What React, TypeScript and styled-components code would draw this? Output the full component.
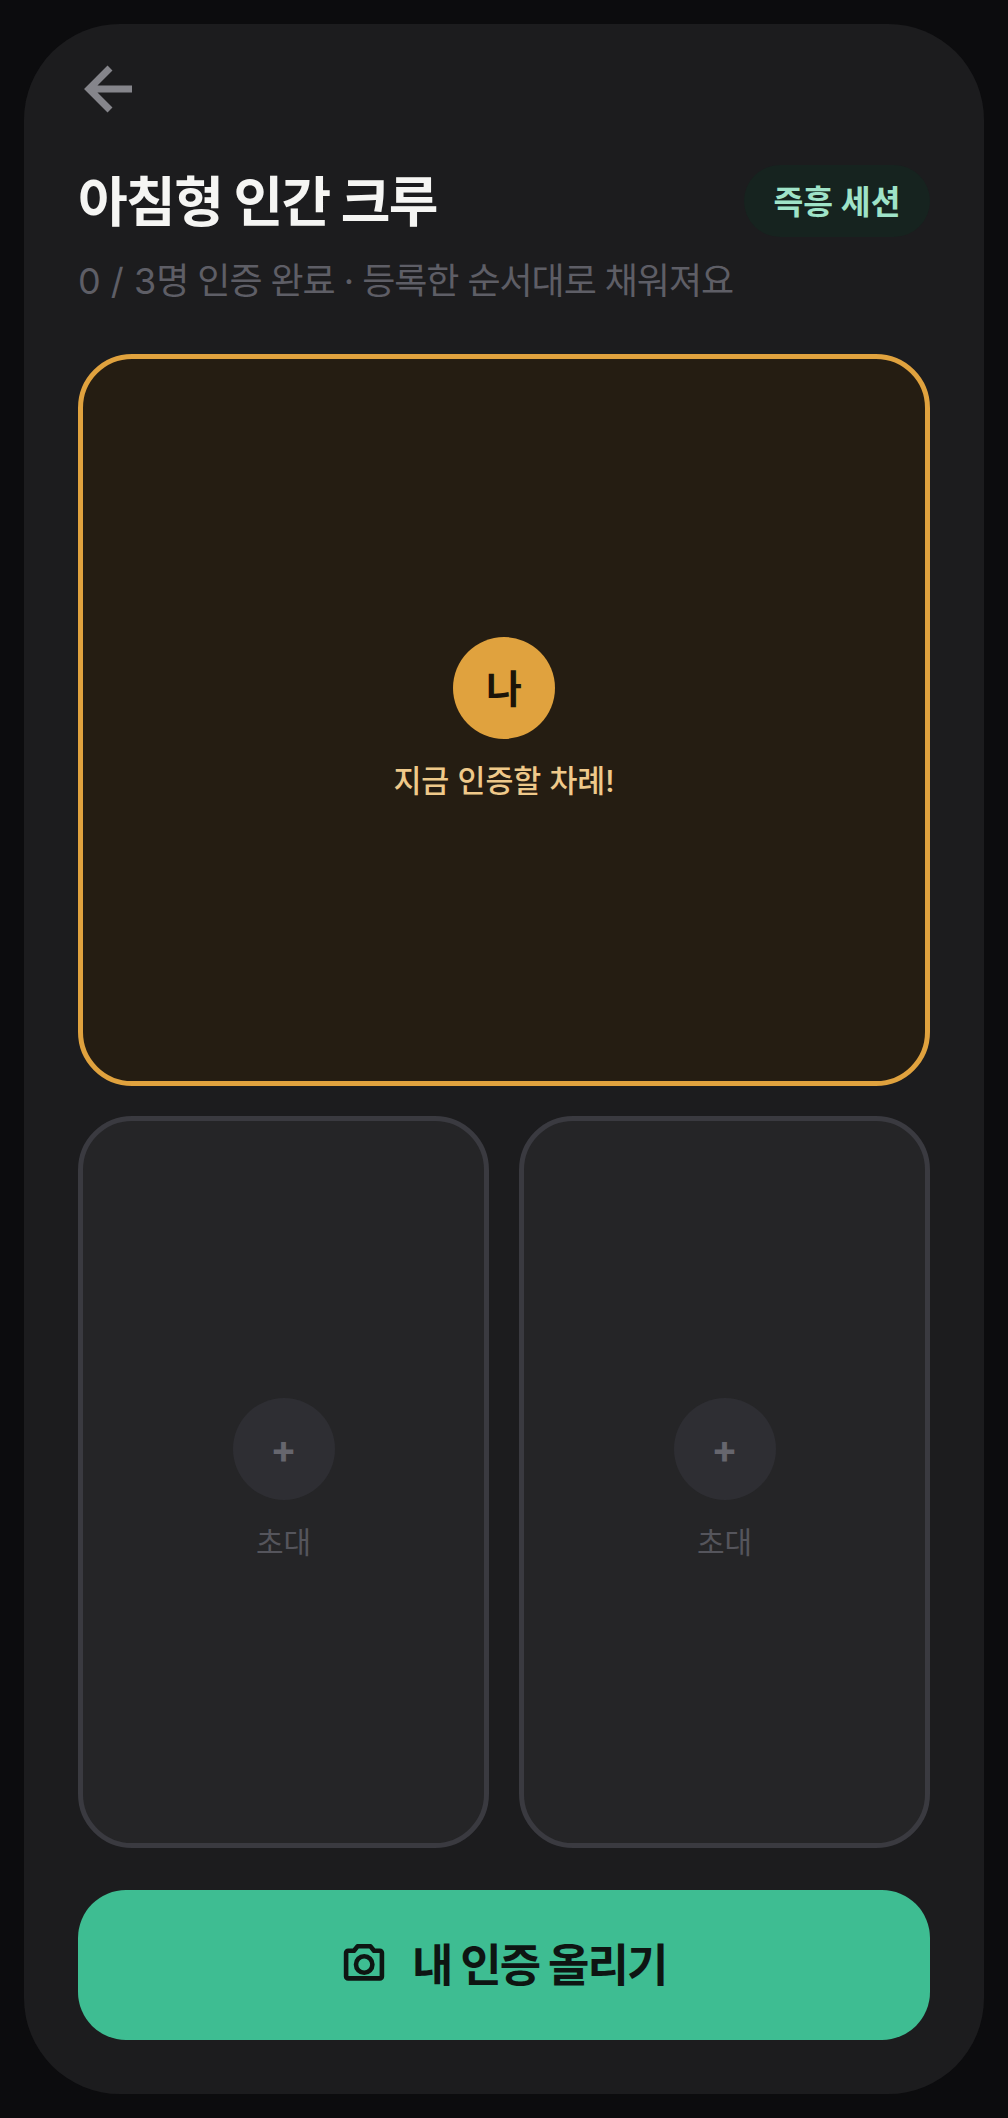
import React from 'react';
import styled, { createGlobalStyle } from 'styled-components';

const Global = createGlobalStyle`
  html, body { margin: 0; padding: 0; background: #0c0c0e; }
  * { box-sizing: border-box; }
  body { font-family: Inter, "Noto Sans CJK KR", sans-serif; }
`;

const Page = styled.div`
  width: 1008px;
  height: 2118px;
  padding: 24px;
  background: #0c0c0e;
`;

const Phone = styled.main`
  width: 960px;
  height: 2070px;
  padding: 41px 54px 54px;
  border-radius: 96px;
  background: #1c1c1e;
  display: flex;
  flex-direction: column;
`;

const BackButton = styled.button`
  width: 48px;
  height: 48px;
  margin-left: 6px;
  padding: 0;
  border: 0;
  background: none;
  color: #85858b;
  display: block;
  flex: none;
`;

const HeaderRow = styled.header`
  margin-top: 52px;
  height: 72px;
  display: flex;
  align-items: flex-start;
  justify-content: space-between;
`;

const Title = styled.h1`
  margin: 0;
  font-size: 54px;
  line-height: 76px;
  font-weight: 700;
  color: #f5f5f3;
  letter-spacing: -1.6px;
`;

const Badge = styled.span`
  height: 72px;
  width: 186px;
  padding-bottom: 4px;
  border-radius: 36px;
  background: #16231f;
  color: #9fe3c8;
  font-size: 32.4px;
  font-weight: 700;
  display: flex;
  align-items: center;
  justify-content: center;
`;

const Subtitle = styled.p`
  margin: 17px 0 0;
  font-size: 36px;
  letter-spacing: -1.05px;
  line-height: 54px;
  color: #5e5e66;
`;

const Count = styled.span`
  letter-spacing: 0;
`;

const Tiles = styled.section`
  margin-top: 46px;
  display: grid;
  grid-template-columns: 1fr 1fr;
  grid-auto-rows: 732px;
  gap: 30px;
`;

const Tile = styled.div<{ $active?: boolean }>`
  grid-column: ${p => (p.$active ? '1 / -1' : 'auto')};
  padding-bottom: ${p => (p.$active ? '1px' : '3px')};
  border: 5px solid ${p => (p.$active ? '#e0a23e' : '#3a3a40')};
  border-radius: 54px;
  background: ${p => (p.$active ? '#251d12' : '#252527')};
  display: flex;
  flex-direction: column;
  align-items: center;
  justify-content: center;
`;

const Avatar = styled.div<{ $active?: boolean }>`
  width: 102px;
  height: 102px;
  padding-bottom: ${p => (p.$active ? '3px' : '0')};
  border-radius: 50%;
  background: ${p => (p.$active ? '#e0a23e' : '#2e2e33')};
  color: ${p => (p.$active ? '#1c1408' : '#66666e')};
  font-size: 39px;
  font-weight: 700;
  display: flex;
  align-items: center;
  justify-content: center;
`;

const TileLabel = styled.div<{ $active?: boolean }>`
  margin-top: ${p => (p.$active ? '20px' : '20px')};
  font-size: ${p => (p.$active ? '30.4px' : '30px')};
  line-height: 44px;
  font-weight: ${p => (p.$active ? 500 : 400)};
  color: ${p => (p.$active ? '#efc98a' : '#55555c')};
`;

const Cta = styled.button`
  margin-top: 42px;
  height: 150px;
  width: 100%;
  border: 0;
  border-radius: 48px;
  background: #3ebd92;
  color: #0e1512;
  font-family: inherit;
  font-size: 45px;
  letter-spacing: -1.9px;
  font-weight: 700;
  display: flex;
  align-items: center;
  justify-content: center;
  gap: 22.5px;
`;

const CtaLabel = styled.span`
  padding-bottom: 6px;
`;

export default function App() {
  return (
    <Page>
      <Global />
      <Phone>
        <BackButton aria-label="뒤로">
          <svg width="48" height="48" viewBox="0 0 48 48" fill="none" stroke="currentColor" strokeWidth="7">
            <path d="M48 24H6M26 3 5 24l21 21" />
          </svg>
        </BackButton>
        <HeaderRow>
          <Title>아침형 인간 크루</Title>
          <Badge>즉흥 세션</Badge>
        </HeaderRow>
        <Subtitle><Count>0 / 3</Count>명 인증 완료 · 등록한 순서대로 채워져요</Subtitle>
        <Tiles>
          <Tile $active>
            <Avatar $active>나</Avatar>
            <TileLabel $active>지금 인증할 차례!</TileLabel>
          </Tile>
          <Tile>
            <Avatar>+</Avatar>
            <TileLabel>초대</TileLabel>
          </Tile>
          <Tile>
            <Avatar>+</Avatar>
            <TileLabel>초대</TileLabel>
          </Tile>
        </Tiles>
        <Cta>
          <svg width="48" height="48" viewBox="0 0 48 48" fill="none" stroke="currentColor" strokeWidth="4.6" strokeLinejoin="round">
            <path d="M7.1 9.75H13L16.5 5.3H29.5L33 9.75H38.9a2 2 0 0 1 2 2V35.4a2 2 0 0 1-2 2H7.1a2 2 0 0 1-2-2V11.75a2 2 0 0 1 2-2Z" />
            <circle cx="23.2" cy="23.5" r="8.2" />
          </svg>
          <CtaLabel>내 인증 올리기</CtaLabel>
        </Cta>
      </Phone>
    </Page>
  );
}
